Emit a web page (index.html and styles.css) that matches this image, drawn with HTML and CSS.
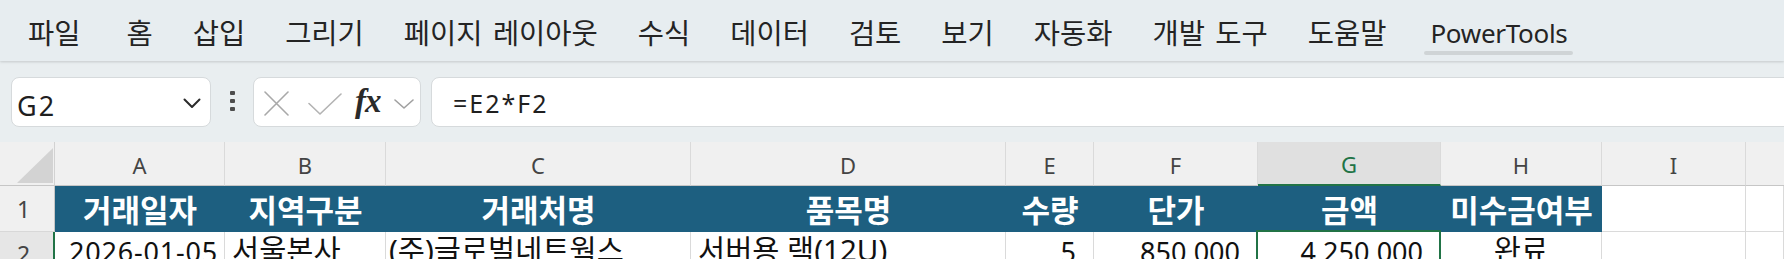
FILE: index.html
```html
<!DOCTYPE html>
<html lang="ko">
<head>
<meta charset="utf-8">
<title>Excel</title>
<link rel="stylesheet" href="styles.css">
</head>
<body>
<div class="app">
  <nav class="menubar">
    <span class="tab first">파일</span>
    <span class="tab">홈</span>
    <span class="tab">삽입</span>
    <span class="tab">그리기</span>
    <span class="tab">페이지 레이아웃</span>
    <span class="tab">수식</span>
    <span class="tab">데이터</span>
    <span class="tab">검토</span>
    <span class="tab">보기</span>
    <span class="tab">자동화</span>
    <span class="tab">개발 도구</span>
    <span class="tab">도움말</span>
    <span class="tab active"><span class="tab-label">PowerTools</span><span class="tab-underline"></span></span>
  </nav>

  <div class="fbar">
    <div class="namebox">
      <span class="namebox-text">G2</span>
      <svg class="namebox-chev" width="18" height="11" viewBox="0 0 18 11"><path d="M1.5 1.5 L9 9 L16.5 1.5" fill="none" stroke="#2b2b2b" stroke-width="2" stroke-linecap="round" stroke-linejoin="round"/></svg>
    </div>
    <div class="grip"><span></span><span></span><span></span></div>
    <div class="fxbox">
      <svg class="ic-x" width="25" height="25" viewBox="0 0 25 25"><path d="M1 1 L24 24 M24 1 L1 24" fill="none" stroke="#a9a9a9" stroke-width="1.6" stroke-linecap="round"/></svg>
      <svg class="ic-check" width="34" height="22" viewBox="0 0 34 22"><path d="M1 10.5 L12 21 L33 1" fill="none" stroke="#b3b3b3" stroke-width="1.6" stroke-linecap="round" stroke-linejoin="round"/></svg>
      <span class="ic-fx">fx</span>
      <svg class="ic-chev" width="20" height="10" viewBox="0 0 20 10"><path d="M1 1 L10 9 L19 1" fill="none" stroke="#a0a0a0" stroke-width="1.6" stroke-linecap="round" stroke-linejoin="round"/></svg>
    </div>
    <div class="formula">=E2*F2</div>
  </div>

  <div class="sheet">
    <div class="corner"><svg width="36" height="35" viewBox="0 0 36 35"><polygon points="36,0 36,35 0,35" fill="#d3d3d3"/></svg></div>
    <div class="colh">A</div>
    <div class="colh">B</div>
    <div class="colh">C</div>
    <div class="colh">D</div>
    <div class="colh">E</div>
    <div class="colh">F</div>
    <div class="colh sel">G</div>
    <div class="colh">H</div>
    <div class="colh">I</div>
    <div class="colh last"></div>

    <div class="rowh">1</div>
    <div class="band">거래일자</div>
    <div class="band">지역구분</div>
    <div class="band">거래처명</div>
    <div class="band">품목명</div>
    <div class="band">수량</div>
    <div class="band">단가</div>
    <div class="band">금액</div>
    <div class="band">미수금여부</div>
    <div class="cell"></div>
    <div class="cell"></div>

    <div class="rowh sel">2</div>
    <div class="cell num date">2026-01-05</div>
    <div class="cell txt">서울본사</div>
    <div class="cell txt tight">(주)글로벌네트웍스</div>
    <div class="cell txt">서버용 랙(12U)</div>
    <div class="cell num">5</div>
    <div class="cell num">850,000</div>
    <div class="cell num active">4,250,000</div>
    <div class="cell ctr kr">완료</div>
    <div class="cell"></div>
    <div class="cell"></div>
  </div>
</div>
</body>
</html>
```

FILE: styles.css
```css
* { box-sizing: border-box; }

html, body {
  margin: 0;
  padding: 0;
}

body {
  width: 1784px;
  height: 259px;
  overflow: hidden;
  background: #e9eef0;
  font-family: "Noto Sans", "Noto Sans CJK KR", sans-serif;
  color: #242424;
}

.app {
  display: flex;
  flex-direction: column;
}

/* ---------- menu bar ---------- */
.menubar {
  height: 61px;
  display: flex;
  align-items: flex-start;
  gap: 40px;
  padding: 16px 0 0 28px;
  background: #e7edf0;
  box-shadow: 0 1px 2px rgba(0, 0, 0, 0.10), 0 2px 3px rgba(0, 0, 0, 0.04);
  position: relative;
  z-index: 1;
  font-size: 28.5px;
  line-height: 34px;
  word-spacing: 3px;
  white-space: nowrap;
}

.tab.first { margin-right: 6px; }

.tab.active {
  display: flex;
  flex-direction: column;
  align-items: stretch;
  padding: 0 6px;
  margin-left: -2px;
}

.tab-label {
  font-size: 26px;
  letter-spacing: -0.3px;
}

.tab-underline {
  display: block;
  height: 4px;
  margin-top: 1px;
  margin-left: -6px;
  margin-right: -6px;
  border-radius: 2px;
  background: #cfd4d6;
}

/* ---------- formula bar ---------- */
.fbar {
  height: 81px;
  display: flex;
  align-items: flex-start;
  padding: 16px 0 0 11px;
}

.namebox,
.fxbox,
.formula {
  height: 50px;
  background: #ffffff;
  border: 1px solid #d6dadc;
  border-radius: 8px;
}

.namebox {
  width: 200px;
  display: flex;
  align-items: center;
  justify-content: space-between;
  padding: 0 9px 0 5px;
}

.namebox-text {
  font-size: 27px;
  letter-spacing: 2px;
  color: #1f1f1f;
  padding-top: 6px;
}

.namebox-chev { margin-top: 2px; }

.grip {
  width: 42px;
  height: 50px;
  display: flex;
  flex-direction: column;
  align-items: center;
  justify-content: center;
  gap: 4px;
  padding-bottom: 3px;
}

.grip span {
  width: 5px;
  height: 4px;
  border-radius: 1px;
  background: #4d4d4d;
}

.fxbox {
  width: 168px;
  display: flex;
  align-items: center;
  padding-left: 10px;
}

.ic-x { margin-top: 3px; }
.ic-check { margin-left: 19px; margin-top: 3px; }

.ic-fx {
  margin-left: 13px;
  font-family: "Liberation Serif", serif;
  font-style: italic;
  font-weight: bold;
  font-size: 33px;
  line-height: 1;
  color: #2a2a2a;
  letter-spacing: -1px;
  margin-top: -2px;
}

.ic-chev { margin-left: 13px; margin-top: 4px; }

.formula {
  flex: 1;
  margin-left: 10px;
  margin-right: -20px;
  padding: 8px 0 0 21px;
  font-size: 25px;
  letter-spacing: 2px;
  line-height: 34px;
  color: #1f1f1f;
  border-radius: 8px 0 0 8px;
}

/* ---------- sheet ---------- */
.sheet {
  display: grid;
  grid-template-columns: 55px 170px 161px 305px 315px 88px 164px 183px 161px 144px 1fr;
  grid-template-rows: 44px 46px 46px;
  background: #ffffff;
}

.corner {
  background: #f0f0f0;
  border-bottom: 1px solid #c6c6c6;
  border-right: 1px solid #d2d2d2;
  display: flex;
  justify-content: flex-end;
  align-items: flex-end;
  padding: 0 1px 2px 0;
}

.colh {
  background: #f0f0f0;
  border-right: 1px solid #dadada;
  border-bottom: 1px solid #c6c6c6;
  display: flex;
  align-items: center;
  justify-content: center;
  font-size: 22px;
  color: #444;
  padding-top: 2px;
}

.colh.last { border-right: none; }

.colh.sel {
  background: #e0e0e0;
  color: #217346;
  border-bottom: 2px solid #217346;
}

.rowh {
  background: #f0f0f0;
  border-right: 1px solid #c6c6c6;
  border-bottom: 1px solid #d8d8d8;
  display: flex;
  align-items: center;
  padding-left: 17px;
  font-size: 23px;
  color: #444;
}

.rowh.sel {
  background: #e6e6e6;
  border-right: 2px solid #217346;
  align-items: flex-start;
  padding-top: 6px;
}

.band {
  background: #1d5f80;
  color: #ffffff;
  font-weight: bold;
  font-size: 31px;
  display: flex;
  align-items: center;
  justify-content: center;
  white-space: nowrap;
  border-bottom: 1px solid #1d5f80;
}

.cell {
  background: #ffffff;
  border-right: 1px solid #dadada;
  border-bottom: 1px solid #dadada;
  font-size: 27px;
  line-height: 30px;
  padding-top: 5px;
  color: #111;
  white-space: nowrap;
  display: flex;
  align-items: flex-start;
}

.cell.txt,
.cell.kr {
  font-size: 29.5px;
  padding-top: 3px;
}

.cell.txt { padding-left: 7px; }
.cell.tight { padding-left: 3px; }

.cell.num {
  justify-content: flex-end;
  padding-right: 17px;
}

.cell.date {
  padding-right: 6px;
  letter-spacing: 0.8px;
}

.cell.ctr { justify-content: center; }

.cell.active {
  position: relative;
}

.cell.active::after {
  content: "";
  position: absolute;
  left: -2px;
  top: -2px;
  right: -1px;
  bottom: -2px;
  border: 2px solid #217346;
}
```
